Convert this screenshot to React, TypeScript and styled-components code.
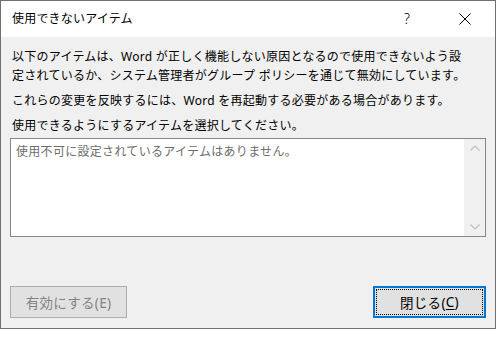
import styled, { createGlobalStyle } from "styled-components";

const GlobalStyle = createGlobalStyle`
  html, body {
    margin: 0;
    padding: 0;
    background: #fff;
  }
  body {
    font-family: "Noto Sans", "Noto Sans CJK JP", sans-serif;
    font-size: 12px;
  }
`;

const Window = styled.div`
  width: 496px;
  height: 329px;
  box-sizing: border-box;
  border: 1px solid #707070;
  background: #f0f0f0;
  display: flex;
  flex-direction: column;
`;

const TitleBar = styled.div`
  height: 36px;
  background: #fff;
  display: flex;
  align-items: center;
  padding-left: 11px;
`;

const Title = styled.div`
  flex: 1;
  font-size: 12px;
  letter-spacing: 0.2px;
  color: #000;
  padding-bottom: 2px;
`;

const TitleButton = styled.div<{ $w: number }>`
  width: ${(p) => p.$w}px;
  height: 36px;
  display: flex;
  align-items: center;
  justify-content: center;
  color: #000;
`;

const Help = styled.span`
  font-family: "Noto Sans", sans-serif;
  font-size: 14px;
  font-weight: 300;
  margin-bottom: 2px;
`;

const Body = styled.div`
  flex: 1;
  display: flex;
  flex-direction: column;
  padding: 10px 9px 10px 9px;
`;

const Para = styled.p<{ $gap?: number }>`
  margin: 0 0 ${(p) => p.$gap ?? 6}px 2px;
  line-height: 19px;
  letter-spacing: 0.25px;
  color: #000;
  white-space: nowrap;
`;

const ListBox = styled.div`
  height: 99px;
  width: 476px;
  box-sizing: border-box;
  border: 1px solid #828790;
  background: #fff;
  display: flex;
  margin-top: -3px;
`;

const ListContent = styled.div`
  flex: 1;
  padding: 3px 5px;
  color: #6d6d6d;
  line-height: 19px;
  letter-spacing: 0.3px;
`;

const ScrollBar = styled.div`
  width: 21px;
  background: #f0f0f0;
  display: flex;
  flex-direction: column;
  justify-content: space-between;
  align-items: center;
  padding: 6px 0 6px;
`;

const Footer = styled.div`
  margin-top: auto;
  display: flex;
  justify-content: space-between;
`;

const Button = styled.div<{ $disabled?: boolean; $focused?: boolean }>`
  height: 32px;
  box-sizing: border-box;
  background: #e1e1e1;
  border: ${(p) => (p.$focused ? "2px solid #0078d7" : "1px solid #adadad")};
  color: ${(p) => (p.$disabled ? "#838383" : "#000")};
  display: flex;
  align-items: stretch;
  font-size: 13.5px;
  padding: ${(p) => (p.$focused ? "1px" : "0")};
`;

const ButtonInner = styled.div<{ $focused?: boolean; $w: number }>`
  width: ${(p) => p.$w}px;
  display: flex;
  align-items: center;
  justify-content: center;
  border: 1px dotted ${(p) => (p.$focused ? "#000" : "transparent")};
  padding-bottom: 1px;
  letter-spacing: 0.3px;
`;

const Key = styled.span`
  text-decoration: underline;
  text-underline-offset: 2px;
`;

const Chevron = ({ up }: { up?: boolean }) => (
  <svg width="10" height="6" viewBox="0 0 10 6">
    <polyline
      points={up ? "0.5,5.5 5,1 9.5,5.5" : "0.5,0.5 5,5 9.5,0.5"}
      fill="none"
      stroke="#bfbfbf"
      strokeWidth="1.2"
    />
  </svg>
);

export default function App() {
  return (
    <>
      <GlobalStyle />
      <Window>
        <TitleBar>
          <Title>使用できないアイテム</Title>
          <TitleButton $w={56}>
            <Help>?</Help>
          </TitleButton>
          <TitleButton $w={60}>
            <svg width="12" height="12" viewBox="0 0 12 12">
              <path d="M0.5 0.5 L11.5 11.5 M11.5 0.5 L0.5 11.5" stroke="#000" strokeWidth="1" />
            </svg>
          </TitleButton>
        </TitleBar>
        <Body>
          <Para>
            以下のアイテムは、Word が正しく機能しない原因となるので使用できないよう設
            <br />
            定されているか、システム管理者がグループ ポリシーを通じて無効にしています。
          </Para>
          <Para>これらの変更を反映するには、Word を再起動する必要がある場合があります。</Para>
          <Para>使用できるようにするアイテムを選択してください。</Para>
          <ListBox>
            <ListContent>使用不可に設定されているアイテムはありません。</ListContent>
            <ScrollBar>
              <Chevron up />
              <Chevron />
            </ScrollBar>
          </ListBox>
          <Footer>
            <Button $disabled>
              <ButtonInner $w={113}>有効にする(E)</ButtonInner>
            </Button>
            <Button $focused>
              <ButtonInner $focused $w={105}>
                閉じる(<Key>C</Key>)
              </ButtonInner>
            </Button>
          </Footer>
        </Body>
      </Window>
    </>
  );
}
